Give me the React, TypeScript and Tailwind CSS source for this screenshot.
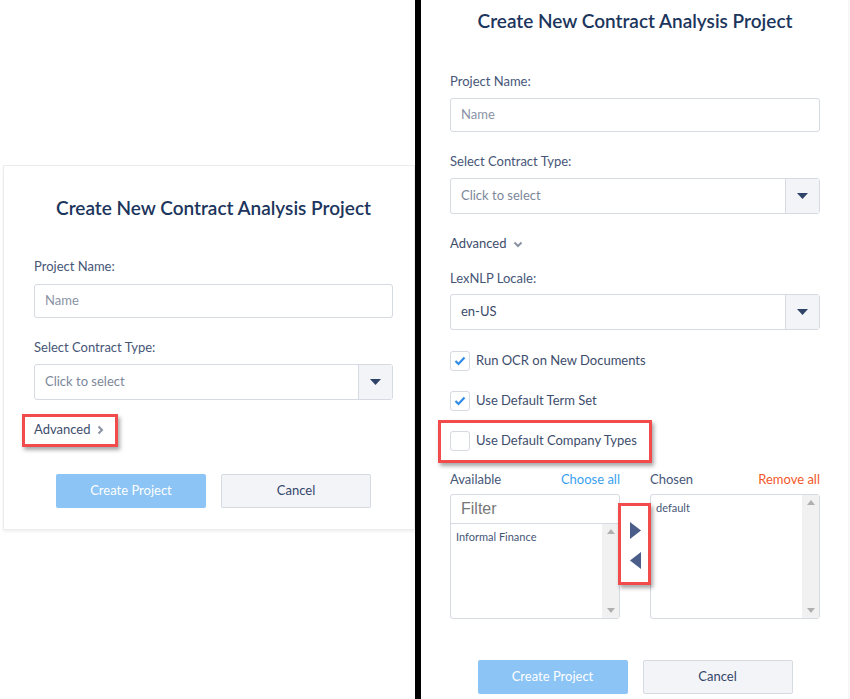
import React from 'react';

const font = { fontFamily: 'Lato, "Noto Sans", sans-serif' };

function Caret() {
  return (
    <svg width="11" height="6" viewBox="0 0 11 6">
      <polygon points="0,0 11,0 5.5,6" fill="#2f4369" />
    </svg>
  );
}

function SelectBox({ value, placeholder }: { value?: string; placeholder?: string }) {
  return (
    <div className="flex h-[36px] w-full rounded-[3px] border border-[#d5dae3] bg-white">
      <div className={`flex flex-1 items-center px-[10px] text-[13px] ${value ? 'text-[#3a4a68]' : 'text-[#7c879b]'}`}>
        {value ?? placeholder}
      </div>
      <div className="flex w-[34px] items-center justify-center border-l border-[#d5dae3] bg-[#f3f4f8]">
        <Caret />
      </div>
    </div>
  );
}

function TextBox() {
  return (
    <div className="flex h-[34px] w-full items-center rounded-[3px] border border-[#d5dae3] bg-white px-[10px] text-[13px] text-[#8a93a5]">
      Name
    </div>
  );
}

function Label({ children }: { children: React.ReactNode }) {
  return <div className="h-[18px] text-[13px] leading-[18px] text-[#465677]">{children}</div>;
}

function RedBox({ className }: { className: string }) {
  return (
    <div
      className={`pointer-events-none absolute border-[3px] border-[#f24b4b] shadow-[2px_3px_4px_rgba(0,0,0,0.35)] ${className}`}
    />
  );
}

function Checkbox({ checked, label }: { checked: boolean; label: string }) {
  return (
    <div className="flex h-[20px] items-center gap-[6px]">
      <div className="flex h-[20px] w-[20px] items-center justify-center rounded-[3px] border border-[#d5dae3] bg-white">
        {checked && (
          <svg width="12" height="10" viewBox="0 0 12 10">
            <polyline points="1.5,5 4.5,8 10.5,1.5" fill="none" stroke="#2d8ae6" strokeWidth="2.2" />
          </svg>
        )}
      </div>
      <span className="text-[13px] text-[#3d4d6c]">{label}</span>
    </div>
  );
}

function Buttons() {
  return (
    <div className="flex justify-center gap-[15px]">
      <div className="flex h-[34px] w-[150px] items-center justify-center rounded-[2px] bg-[#8bc4f5] text-[13px] text-white">
        Create Project
      </div>
      <div className="flex h-[34px] w-[150px] items-center justify-center rounded-[2px] border border-[#d5dae3] bg-[#f3f4f8] text-[13px] text-[#34466a]">
        Cancel
      </div>
    </div>
  );
}

function ScrollBar() {
  return (
    <div className="flex w-[17px] flex-col items-center justify-between bg-[#f1f1f1] py-[5px]">
      <svg width="8" height="5" viewBox="0 0 8 5"><polygon points="0,5 8,5 4,0" fill="#b0b0b0" /></svg>
      <svg width="8" height="5" viewBox="0 0 8 5"><polygon points="0,0 8,0 4,5" fill="#b0b0b0" /></svg>
    </div>
  );
}

export default function App() {
  return (
    <div className="flex h-[699px] w-[850px] bg-white" style={font}>
      {/* left: collapsed */}
      <div className="flex w-[415px] flex-col pt-[165px]">
        <div className="ml-[3px] border border-[#ececec] bg-white pb-[21px] pl-[30px] pr-[21px] pt-[28px] shadow-[0_2px_3px_rgba(0,0,0,0.06)]">
          <div className="h-[28px] text-center text-[19px] font-semibold leading-[28px] text-[#1c355c]">
            Create New Contract Analysis Project
          </div>
          <div className="mt-[35px]">
            <Label>Project Name:</Label>
          </div>
          <div className="mt-[9px]"><TextBox /></div>
          <div className="mt-[20px]"><Label>Select Contract Type:</Label></div>
          <div className="mt-[8px]"><SelectBox placeholder="Click to select" /></div>
          <div className="relative mt-[21px] flex h-[18px] items-center gap-[7px] text-[13px] text-[#3d4d6c]">
            Advanced
            <svg width="7" height="10" viewBox="0 0 7 10">
              <polyline points="1.5,1.5 5,5 1.5,8.5" fill="none" stroke="#8a93a5" strokeWidth="2" />
            </svg>
            <RedBox className="left-[-12px] top-[-7px] h-[33px] w-[96px]" />
          </div>
          <div className="mt-[35px]"><Buttons /></div>
        </div>
      </div>

      {/* divider */}
      <div className="w-[6px] bg-black" />

      {/* right: expanded */}
      <div className="flex flex-1 bg-white">
        <div className="flex w-[427px] flex-col pl-[29px] pr-[28px] pt-[7px]">
          <div className="h-[28px] text-center text-[19px] font-semibold leading-[28px] text-[#1c355c]">
            Create New Contract Analysis Project
          </div>
          <div className="mt-[37px]"><Label>Project Name:</Label></div>
          <div className="mt-[8px]"><TextBox /></div>
          <div className="mt-[20px]"><Label>Select Contract Type:</Label></div>
          <div className="mt-[8px]"><SelectBox placeholder="Click to select" /></div>
          <div className="mt-[21px] flex h-[18px] items-center gap-[7px] text-[13px] text-[#3d4d6c]">
            Advanced
            <svg width="10" height="7" viewBox="0 0 10 7">
              <polyline points="1.5,1.5 5,5 8.5,1.5" fill="none" stroke="#8a93a5" strokeWidth="2" />
            </svg>
          </div>
          <div className="mt-[16px]"><Label>LexNLP Locale:</Label></div>
          <div className="mt-[7px]"><SelectBox value="en-US" /></div>

          <div className="mt-[21px] flex flex-col gap-[20px]">
            <Checkbox checked label="Run OCR on New Documents" />
            <Checkbox checked label="Use Default Term Set" />
            <div className="relative">
              <Checkbox checked={false} label="Use Default Company Types" />
              <RedBox className="left-[-12px] top-[-11px] h-[43px] w-[214px]" />
            </div>
          </div>

          {/* dual list */}
          <div className="mt-[20px] flex">
            <div className="flex w-[170px] flex-col">
              <div className="flex h-[18px] items-center justify-between text-[13px]">
                <span className="text-[#465677]">Available</span>
                <span className="text-[#3a9ff0]">Choose all</span>
              </div>
              <div className="mt-[5px] flex h-[125px] flex-col rounded-[3px] border border-[#d5dae3] bg-white">
                <div
                  className="flex h-[29px] items-center border-b border-[#d5dae3] px-[10px] text-[16px] text-[#777]"
                  style={{ fontFamily: '"Liberation Sans", Arial, sans-serif' }}
                >
                  Filter
                </div>
                <div className="flex flex-1">
                  <div className="flex-1 px-[5px] pt-[5px] text-[11px] text-[#465677]">Informal Finance</div>
                  <ScrollBar />
                </div>
              </div>
            </div>
            <div className="relative flex w-[30px] flex-col items-center pt-[51px]">
              <svg width="11" height="17" viewBox="0 0 11 17"><polygon points="0,0 11,8.5 0,17" fill="#4b5e89" /></svg>
              <svg className="mt-[13px]" width="11" height="17" viewBox="0 0 11 17"><polygon points="11,0 0,8.5 11,17" fill="#4b5e89" /></svg>
              <RedBox className="left-[-2px] top-[32px] h-[82px] w-[33px]" />
            </div>
            <div className="flex w-[170px] flex-col">
              <div className="flex h-[18px] items-center justify-between text-[13px]">
                <span className="text-[#465677]">Chosen</span>
                <span className="text-[#f2592a]">Remove all</span>
              </div>
              <div className="mt-[5px] flex h-[125px] rounded-[3px] border border-[#d5dae3] bg-white">
                <div className="flex-1 px-[5px] pt-[5px] text-[11px] text-[#465677]">default</div>
                <ScrollBar />
              </div>
            </div>
          </div>

          <div className="mt-[41px]"><Buttons /></div>
        </div>
        <div className="flex-1 bg-[#f7f7f7]" />
      </div>
    </div>
  );
}
